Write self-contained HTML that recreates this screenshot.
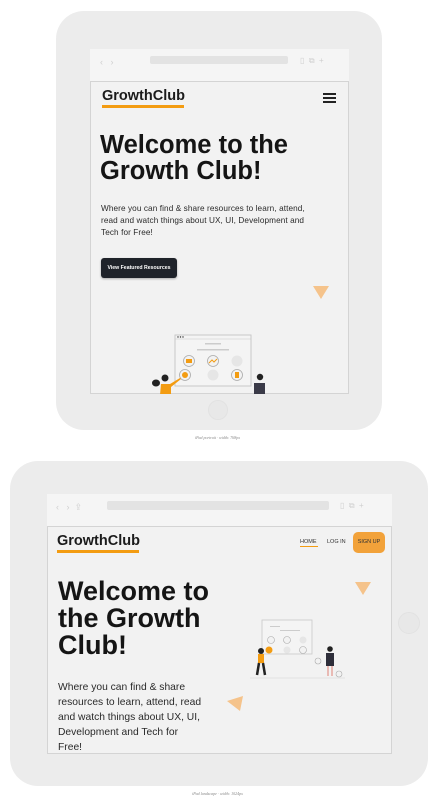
<!DOCTYPE html>
<html><head><meta charset="utf-8"><style>
*{margin:0;padding:0;box-sizing:border-box}
body{width:435px;height:800px;background:#fff;position:relative;overflow:hidden;font-family:"Liberation Sans",sans-serif;color:#1b1b1b}
.abs{position:absolute}
.dev{background:#ececec;border-radius:28px}
.chrome{background:#f5f5f5}
.scr{background:#f2f2f2;border:1px solid #d4d4d4;overflow:hidden}
.logo{font-weight:bold;color:#1b1b1b;white-space:nowrap}
.ul{background:#f39c12}
h1{font-weight:bold;color:#151515;white-space:nowrap}
p{color:#2a2a2a;white-space:nowrap}
.tri{width:0;height:0}
.home{border-radius:50%;background:#e8e8e8;border:1px solid #e2e2e2}
.cap{font-family:"Liberation Serif",serif;font-style:italic;font-size:4px;color:#888;text-align:center;width:100%}
</style></head><body>
<!-- portrait -->
<div class="abs dev" style="left:56px;top:11px;width:326px;height:419px"></div>
<div class="abs chrome" style="left:90px;top:49px;width:259px;height:32px"></div>
<div class="abs" style="left:150px;top:56px;width:138px;height:8px;background:#e3e3e3;border-radius:2px"></div>
<div class="abs" style="left:100px;top:57px;color:#d0d0d0;font-size:9px">‹ &nbsp; ›</div>
<div class="abs" style="left:300px;top:56px;color:#d0d0d0;font-size:8px">▯ &nbsp;⧉ &nbsp;+</div>
<div class="abs scr" style="left:90px;top:81px;width:259px;height:313px"></div>
<div class="abs logo" style="left:102px;top:88px;font-size:14.5px">GrowthClub</div>
<div class="abs ul" style="left:102px;top:105px;width:82px;height:2.5px"></div>
<div class="abs" style="left:323px;top:93px;width:13px;height:1.5px;background:#222;box-shadow:0 4px 0 #222,0 8px 0 #222"></div>
<h1 class="abs" style="left:100px;top:132px;font-size:25.5px;line-height:26px">Welcome to the<br>Growth Club!</h1>
<p class="abs" style="left:101px;top:203px;font-size:8.2px;line-height:12px;letter-spacing:.1px">Where you can find &amp; share resources to learn, attend,<br>read and watch things about UX, UI, Development and<br>Tech for Free!</p>
<div class="abs" style="left:101px;top:258px;width:76px;height:20px;background:#1f232a;border-radius:3px;color:#fff;font-size:5.2px;font-weight:bold;line-height:20px;text-align:center;box-shadow:0 1px 2px rgba(0,0,0,.3)">View Featured Resources</div>
<div class="abs tri" style="left:313px;top:286px;border-left:8.5px solid transparent;border-right:8.5px solid transparent;border-top:13px solid #f5c38b"></div>
<svg class="abs" style="left:140px;top:325px" width="150" height="69" viewBox="0 0 150 69">
<rect x="35" y="10" width="76" height="51" fill="#f4f4f4" stroke="#c8c8c8" stroke-width="1"/>
<line x1="35" y1="14" x2="111" y2="14" stroke="#c8c8c8" stroke-width=".6"/>
<circle cx="38" cy="12" r=".7" fill="#333"/><circle cx="40.5" cy="12" r=".7" fill="#333"/><circle cx="43" cy="12" r=".7" fill="#333"/>
<rect x="65" y="18" width="16" height="1.5" fill="#ccc"/><rect x="57" y="24" width="32" height="1.5" fill="#ccc"/>
<circle cx="49" cy="36" r="5.5" fill="#f2f2f2" stroke="#aaa" stroke-width=".8"/><rect x="46" y="34" width="6" height="4" fill="#f39c12"/>
<circle cx="73" cy="36" r="5.5" fill="#f2f2f2" stroke="#aaa" stroke-width=".8"/><path d="M69 38l3-3 2 2 3-3" stroke="#f39c12" fill="none"/>
<circle cx="97" cy="36" r="5.5" fill="#e6e6e6"/>
<circle cx="73" cy="50" r="5.5" fill="#e6e6e6"/>
<circle cx="97" cy="50" r="5.5" fill="#f2f2f2" stroke="#aaa" stroke-width=".8"/><rect x="95" y="47" width="4" height="6" fill="#f39c12"/>
<circle cx="45" cy="50" r="5.5" fill="#f2f2f2" stroke="#aaa" stroke-width=".8"/><circle cx="45" cy="50" r="3" fill="#f39c12"/>
<circle cx="25" cy="53" r="3.5" fill="#222"/><ellipse cx="16" cy="58" rx="4" ry="3.5" fill="#222"/>
<path d="M21 59h9l10-6 1 1-10 8v8H20z" fill="#f39c12"/>
<circle cx="120" cy="52" r="3.2" fill="#222"/><path d="M114 58h11v11h-11z" fill="#3a3a48"/>
</svg>
<div class="abs home" style="left:208px;top:400px;width:20px;height:20px"></div>
<div class="abs cap" style="top:435px">iPad portrait · width: 768px</div>

<!-- landscape -->
<div class="abs dev" style="left:10px;top:461px;width:418px;height:325px"></div>
<div class="abs chrome" style="left:47px;top:494px;width:345px;height:32px"></div>
<div class="abs" style="left:107px;top:501px;width:222px;height:9px;background:#e3e3e3;border-radius:2px"></div>
<div class="abs" style="left:56px;top:502px;color:#d0d0d0;font-size:9px">‹ &nbsp; › &nbsp;⇪</div>
<div class="abs" style="left:340px;top:501px;color:#d0d0d0;font-size:8px">▯ &nbsp;⧉ &nbsp;+</div>
<div class="abs scr" style="left:47px;top:526px;width:345px;height:228px"></div>
<div class="abs logo" style="left:57px;top:533px;font-size:14.5px">GrowthClub</div>
<div class="abs ul" style="left:57px;top:550px;width:82px;height:2.5px"></div>
<div class="abs" style="left:300px;top:539px;font-size:5.5px;color:#333">HOME</div>
<div class="abs ul" style="left:300px;top:546px;width:18px;height:1px"></div>
<div class="abs" style="left:327px;top:539px;font-size:5.5px;color:#333">LOG IN</div>
<div class="abs" style="left:353px;top:532px;width:32px;height:21px;background:#f2a23a;border-radius:5px;font-size:5.5px;line-height:21px;text-align:center;color:#333">SIGN UP</div>
<h1 class="abs" style="left:58px;top:578px;font-size:27px;line-height:27px">Welcome to<br>the Growth<br>Club!</h1>
<p class="abs" style="left:58px;top:680px;font-size:10.3px;line-height:15px">Where you can find &amp; share<br>resources to learn, attend, read<br>and watch things about UX, UI,<br>Development and Tech for<br>Free!</p>
<div class="abs tri" style="left:355px;top:582px;border-left:8.5px solid transparent;border-right:8.5px solid transparent;border-top:13px solid #f5c38b"></div>
<svg class="abs" style="left:226px;top:695px" width="18" height="17"><path d="M1 6L17 1 14 16z" fill="#f5c38b"/></svg>
<svg class="abs" style="left:250px;top:618px" width="100" height="64" viewBox="0 0 100 64">
<rect x="12" y="2" width="50" height="34" fill="#f4f4f4" stroke="#c8c8c8" stroke-width=".8"/>
<rect x="20" y="8" width="10" height="1" fill="#ccc"/><rect x="30" y="12" width="20" height="1" fill="#ccc"/>
<circle cx="21" cy="22" r="3.5" fill="#f2f2f2" stroke="#aaa" stroke-width=".6"/><circle cx="37" cy="22" r="3.5" fill="#f2f2f2" stroke="#aaa" stroke-width=".6"/><circle cx="53" cy="22" r="3.5" fill="#e6e6e6"/>
<circle cx="19" cy="32" r="3.5" fill="#f39c12"/><circle cx="37" cy="32" r="3.5" fill="#e6e6e6"/><circle cx="53" cy="32" r="3.5" fill="#f2f2f2" stroke="#aaa" stroke-width=".6"/>
<circle cx="11" cy="33" r="3" fill="#222"/><rect x="8" y="36" width="6" height="9" fill="#f39c12"/><path d="M9 45l-2 12M13 45l2 12" stroke="#222" stroke-width="2.5"/>
<circle cx="80" cy="31" r="2.8" fill="#222"/><rect x="76" y="35" width="8" height="13" fill="#2e2e3a"/><path d="M78 48v10M82 48v10" stroke="#e6a8a0" stroke-width="1.5"/>
<circle cx="68" cy="43" r="3" fill="#f2f2f2" stroke="#aaa" stroke-width=".6"/><circle cx="89" cy="56" r="3" fill="#f2f2f2" stroke="#aaa" stroke-width=".6"/>
<line x1="0" y1="60" x2="95" y2="60" stroke="#d0d0d0" stroke-width=".6"/>
</svg>
<div class="abs home" style="left:398px;top:612px;width:22px;height:22px"></div>
<div class="abs cap" style="top:791px">iPad landscape · width: 1024px</div>
</body></html>
